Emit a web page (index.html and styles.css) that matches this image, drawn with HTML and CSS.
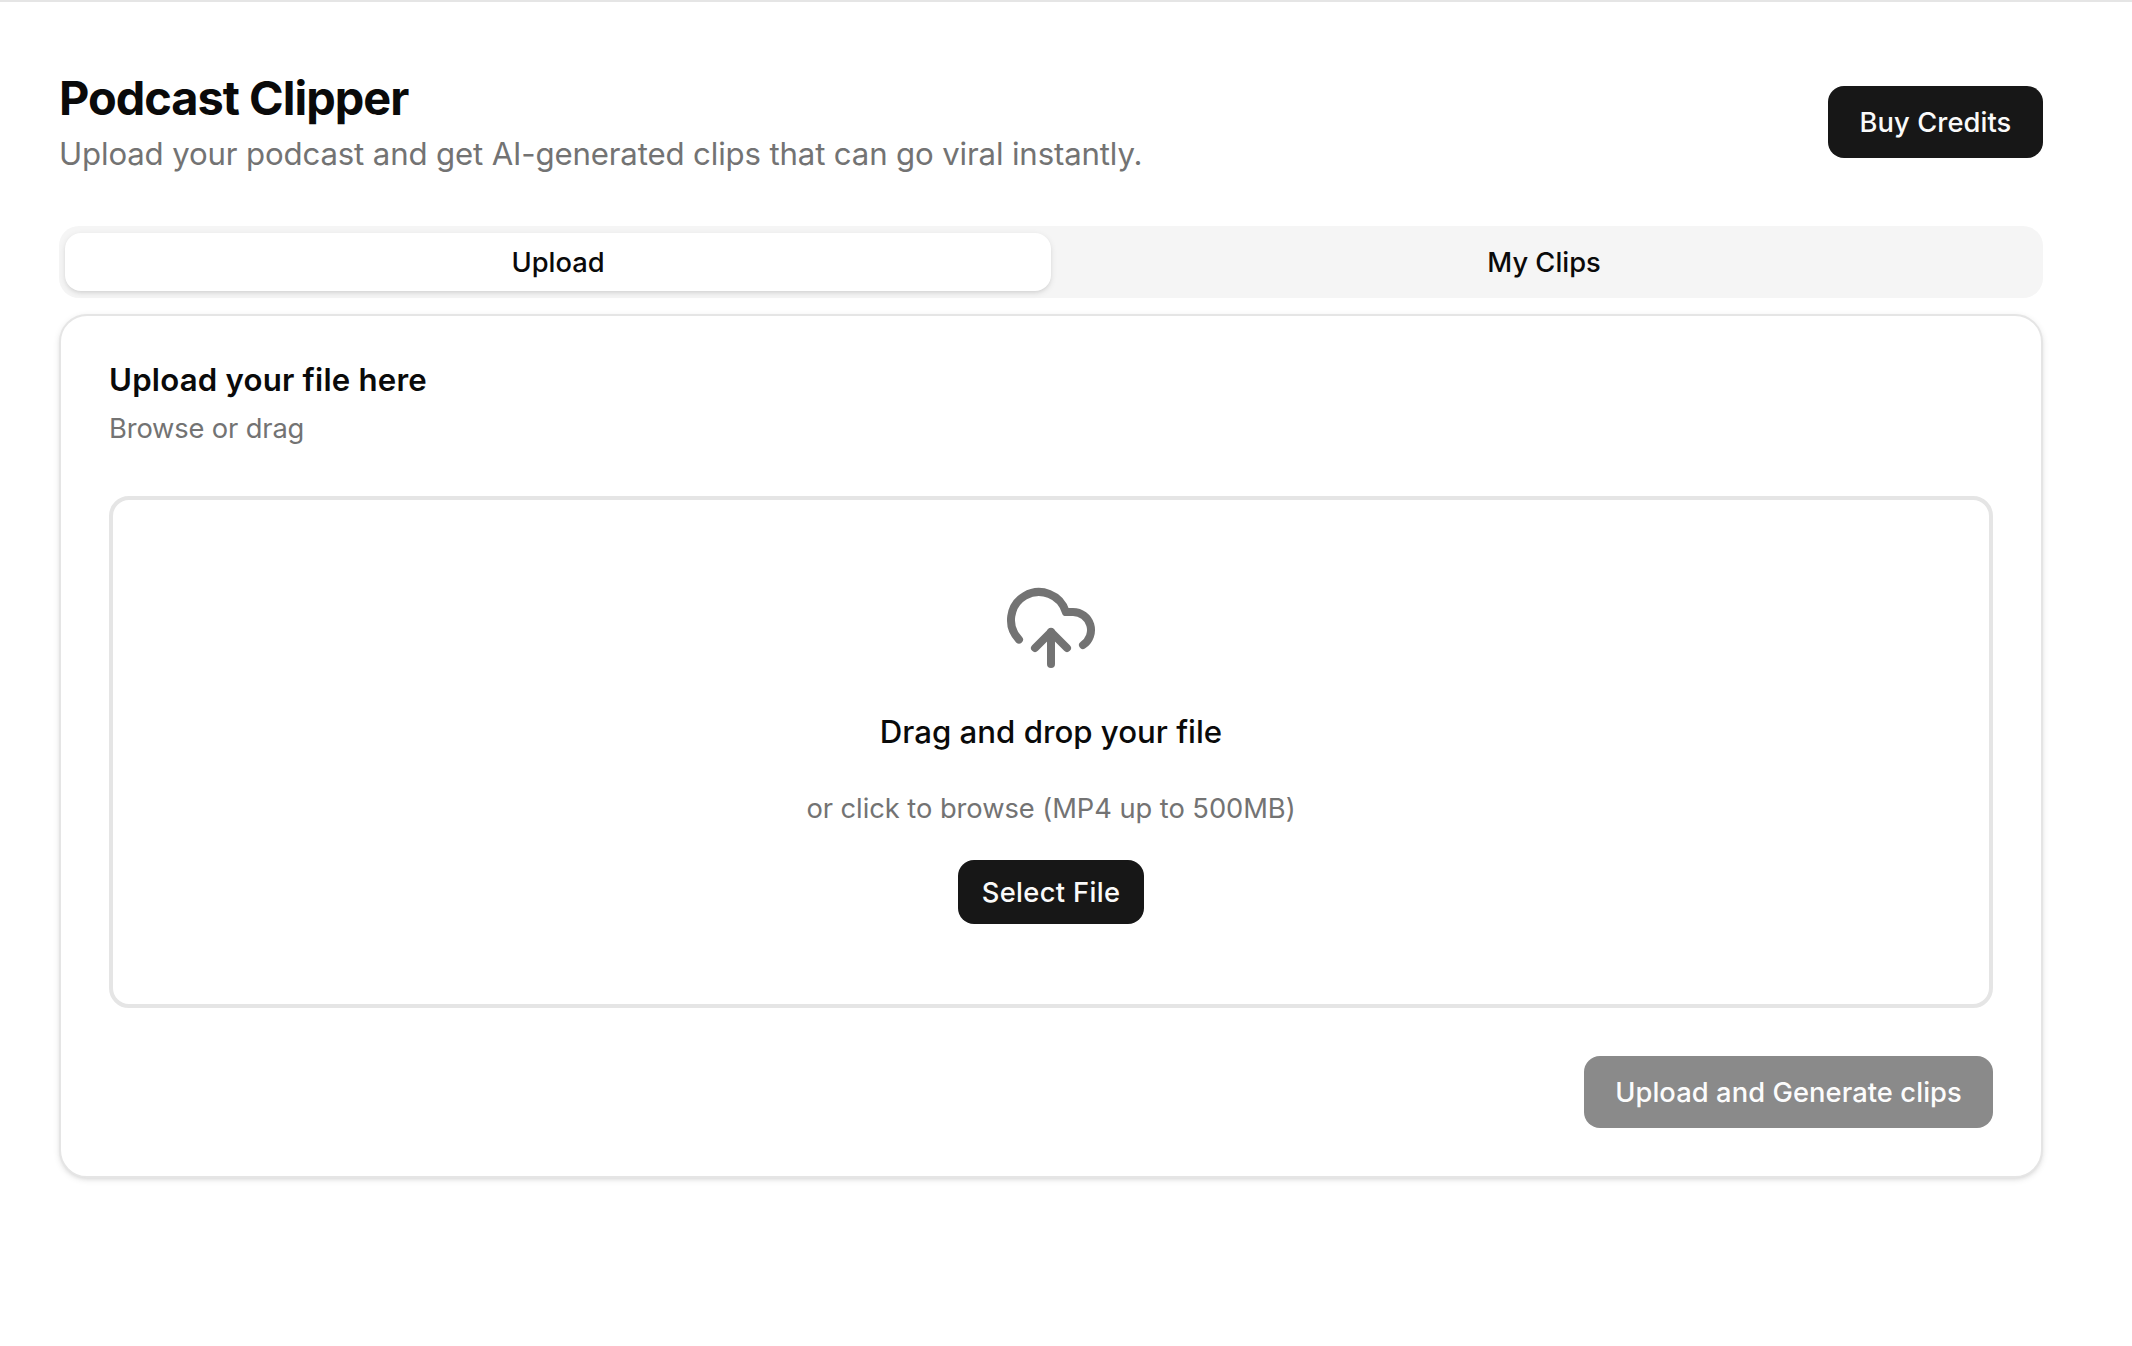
FILE: index.html
```html
<!DOCTYPE html>
<html lang="en">
<head>
<meta charset="utf-8">
<title>Podcast Clipper</title>
<link rel="stylesheet" href="styles.css">
</head>
<body>
<main class="page">
  <header class="header">
    <div>
      <h1 class="title">Podcast Clipper</h1>
      <p class="subtitle">Upload your podcast and get AI-generated clips that can go viral instantly.</p>
    </div>
    <button class="button button-buy">Buy Credits</button>
  </header>
  <div class="tabs" role="tablist">
    <button class="tab tab-active" role="tab">Upload</button>
    <button class="tab" role="tab">My Clips</button>
  </div>
  <section class="card">
    <h2 class="card-title">Upload your file here</h2>
    <p class="card-description">Browse or drag</p>
    <div class="dropzone">
      <svg class="upload-icon" viewBox="0 0 24 24" fill="none" stroke="currentColor" stroke-width="2" stroke-linecap="round" stroke-linejoin="round"><path d="M12 13v8"/><path d="M4 14.899A7 7 0 1 1 15.71 8h1.79a4.5 4.5 0 0 1 2.5 8.242"/><path d="m8 17 4-4 4 4"/></svg>
      <p class="drop-title">Drag and drop your file</p>
      <p class="drop-hint">or click to browse (MP4 up to 500MB)</p>
      <button class="button button-select">Select File</button>
    </div>
    <button class="button button-generate" disabled>Upload and Generate clips</button>
  </section>
</main>
</body>
</html>
```
FILE: styles.css
```css
* {
  box-sizing: border-box;
  margin: 0;
}

body {
  min-height: 100vh;
  border-top: 2px solid #e5e5e5;
  background: #fff;
  color: #0a0a0a;
  font-family: Inter, "Liberation Sans", sans-serif;
  font-size: 27.3px;
}

button {
  border: 0;
  color: inherit;
  font: inherit;
}

.page {
  width: 1984px;
  margin-left: 59px;
  padding: 64px 0;
}

.header {
  display: flex;
  justify-content: space-between;
  align-items: center;
  margin-bottom: 48px;
}

.title {
  font-size: 46.9px;
  line-height: 64px;
  font-weight: 700;
  letter-spacing: -1px;
}

.subtitle {
  font-size: 31.2px;
  line-height: 48px;
  letter-spacing: -0.15px;
  color: #737373;
}

.button {
  display: flex;
  align-items: center;
  justify-content: center;
  height: 72px;
  padding: 2px 0 0;
  border-radius: 16px;
  background: #171717;
  color: #fafafa;
  font-weight: 500;
  line-height: 40px;
  letter-spacing: 0.08px;
  white-space: nowrap;
}

.button-buy {
  width: 215px;
}

.tabs {
  display: grid;
  grid-template-columns: 1fr 1fr;
  align-items: center;
  height: 72px;
  margin-bottom: 16px;
  padding: 6px;
  border-radius: 20px;
  background: #f5f5f5;
}

.tab {
  height: 58px;
  border-radius: 16px;
  background: none;
  font-weight: 500;
}

.tab-active {
  background: #fff;
  box-shadow: 0 2px 6px rgb(0 0 0 / 0.1), 0 2px 4px -2px rgb(0 0 0 / 0.1);
}

.card {
  display: flex;
  flex-direction: column;
  padding: 48px;
  border: 2px solid #e5e5e5;
  border-radius: 28px;
  background: #fff;
  box-shadow: 0 2px 6px rgb(0 0 0 / 0.1), 0 2px 4px -2px rgb(0 0 0 / 0.1);
}

.card-title {
  margin-bottom: 12px;
  font-size: 31.2px;
  line-height: 32px;
  font-weight: 600;
  letter-spacing: 0.2px;
}

.card-description {
  padding-top: 1px;
  line-height: 40px;
  letter-spacing: -0.15px;
  color: #737373;
}

.dropzone {
  display: flex;
  flex-direction: column;
  align-items: center;
  gap: 32px;
  height: 512px;
  margin: 47px 0 48px;
  padding: 80px;
  border: 4px solid #e5e5e5;
  border-radius: 20px;
}

.upload-icon {
  width: 96px;
  height: 96px;
  color: #737373;
}

.drop-title {
  font-size: 31.2px;
  line-height: 48px;
  font-weight: 500;
}

.drop-hint {
  padding-top: 1px;
  margin-bottom: -1px;
  line-height: 40px;
  letter-spacing: -0.05px;
  color: #737373;
}

.button-select {
  width: 186px;
  height: 64px;
  letter-spacing: 0.35px;
}

.button-generate {
  width: 409px;
  align-self: flex-end;
  opacity: 0.5;
}
```
